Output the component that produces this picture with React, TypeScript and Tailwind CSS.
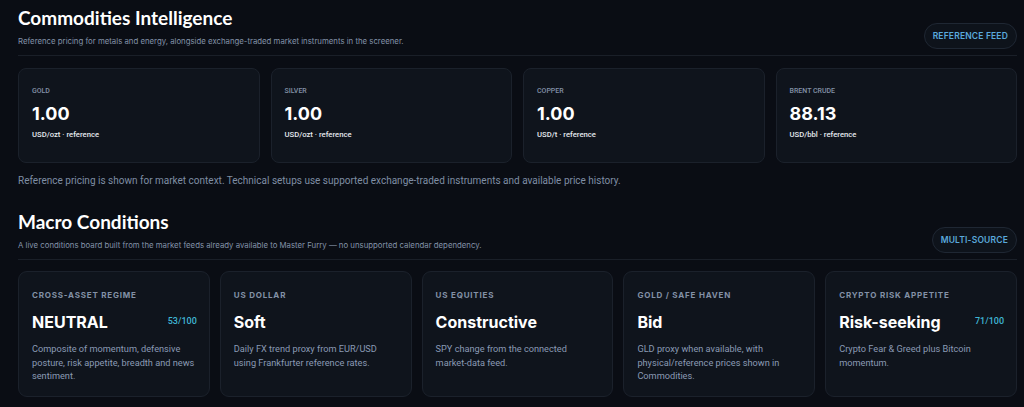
const COMMODITIES = [
  { label: 'GOLD', value: '1.00', unit: 'USD/ozt' },
  { label: 'SILVER', value: '1.00', unit: 'USD/ozt' },
  { label: 'COPPER', value: '1.00', unit: 'USD/t' },
  { label: 'BRENT CRUDE', value: '88.13', unit: 'USD/bbl' },
];

type Macro = { label: string; title: string; score?: string; desc: string };

const MACRO: Macro[] = [
  {
    label: 'CROSS-ASSET REGIME',
    title: 'NEUTRAL',
    score: '53/100',
    desc: 'Composite of momentum, defensive posture, risk appetite, breadth and news sentiment.',
  },
  {
    label: 'US DOLLAR',
    title: 'Soft',
    desc: 'Daily FX trend proxy from EUR/USD using Frankfurter reference rates.',
  },
  {
    label: 'US EQUITIES',
    title: 'Constructive',
    desc: 'SPY change from the connected market-data feed.',
  },
  {
    label: 'GOLD / SAFE HAVEN',
    title: 'Bid',
    desc: 'GLD proxy when available, with physical/reference prices shown in Commodities.',
  },
  {
    label: 'CRYPTO RISK APPETITE',
    title: 'Risk-seeking',
    score: '71/100',
    desc: 'Crypto Fear & Greed plus Bitcoin momentum.',
  },
];

function Badge({ children }: { children: string }) {
  return (
    <span className="block rounded-full border border-[#1f2733] bg-[#0e131b] px-[8px] py-[7px] text-[8.5px] font-semibold leading-[10px] tracking-[0.02em] text-[#5aa9dc]">
      {children}
    </span>
  );
}

function SectionHeader({ title, subtitle, badge }: { title: string; subtitle: string; badge: string }) {
  return (
    <div className="flex items-end justify-between border-b border-[#1a1f28]">
      <div>
        <h2 className="font-['Lato',sans-serif] text-[19px] font-bold leading-[24px] text-white">{title}</h2>
        <p className="mt-[6px] mb-[9px] text-[7.8px] leading-[10px] text-[#8392a8]">{subtitle}</p>
      </div>
      <div className="mb-[6px]">
        <Badge>{badge}</Badge>
      </div>
    </div>
  );
}

export default function App() {
  return (
    <div className="min-h-[407px] bg-[#0a0d14] pl-[18px] pr-[7px] pt-[6px] font-['Inter',sans-serif]">
      <SectionHeader
        title="Commodities Intelligence"
        subtitle="Reference pricing for metals and energy, alongside exchange-traded market instruments in the screener."
        badge="REFERENCE FEED"
      />

      <div className="mt-[12px] grid grid-cols-4 gap-[11px]">
        {COMMODITIES.map((c) => (
          <div key={c.label} className="h-[95px] rounded-[8px] border border-[#1b212b] bg-[#0f141c] px-[13px] pt-[18px]">
            <div className="font-['Roboto',sans-serif] text-[7px] font-medium leading-[9px] text-[#8391a6]">{c.label}</div>
            <div className="mt-[7px] text-[18px] font-bold leading-[22px] text-white">{c.value}</div>
            <div className="mt-[5px] font-['Roboto',sans-serif] text-[7.7px] font-medium leading-[10px] text-[#e5e9ef]">
              {c.unit} · reference
            </div>
          </div>
        ))}
      </div>

      <p className="mt-[11px] font-['Roboto',sans-serif] text-[10px] leading-[14px] text-[#7f8ea4]">
        Reference pricing is shown for market context. Technical setups use supported exchange-traded instruments and available price history.
      </p>

      <div className="mt-[22px]">
        <SectionHeader
          title="Macro Conditions"
          subtitle="A live conditions board built from the market feeds already available to Master Furry — no unsupported calendar dependency."
          badge="MULTI-SOURCE"
        />
      </div>

      <div className="mt-[11px] grid grid-cols-5 gap-[10px]">
        {MACRO.map((m) => (
          <div key={m.label} className="h-[126px] rounded-[9px] border border-[#1b212b] bg-[#0f141c] pl-[13px] pr-[12px] pt-[18px]">
            <div className="text-[8px] font-bold leading-[10px] tracking-[0.1em] text-[#8391a6]">{m.label}</div>
            <div className="mt-[12px] flex items-center justify-between">
              <span className="text-[16px] font-bold leading-[20px] text-white">{m.title}</span>
              {m.score && <span className="font-['Roboto',sans-serif] text-[9px] font-medium text-[#3fb6d4]">{m.score}</span>}
            </div>
            <p className="mt-[10px] max-w-[163px] font-['Roboto',sans-serif] text-[9.2px] leading-[13.7px] text-[#8a9ab4]">
              {m.desc}
            </p>
          </div>
        ))}
      </div>
    </div>
  );
}
